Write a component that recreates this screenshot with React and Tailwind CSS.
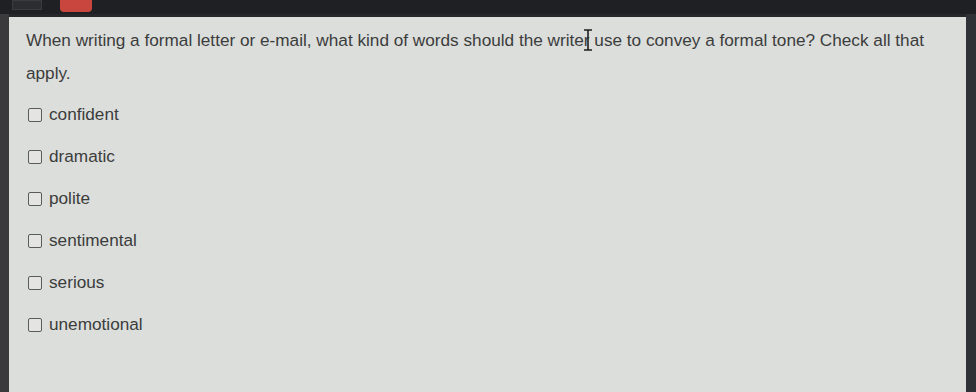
import React from "react";

const options = ["confident", "dramatic", "polite", "sentimental", "serious", "unemotional"];

const App = () => {
  return (
    <div className="flex h-[392px] w-[976px] flex-col overflow-hidden bg-[#26272b] font-['Liberation_Sans',Arial,sans-serif]">
      {/* Top strip */}
      <div className="flex h-[14px] items-start bg-[#1f2023]">
        <div className="ml-[12px] h-[10px] w-[30px] border border-[#3a3b3f] bg-[#2c2d31]" />
        <div className="ml-[18px] h-[12px] w-[32px] rounded-b-sm bg-[#c8463e]" />
      </div>

      <div className="flex flex-1">
        <div className="w-[9px] bg-[#3a3a3c]" />

        {/* Question panel */}
        <div className="relative mt-[3px] flex-1 bg-[#dcdedb] pl-[17px] pt-[7px] text-[17.2px] text-[#3b3c3c]">
          <p className="w-[912px] leading-[33px]">
            When writing a formal letter or e-mail, what kind of words should the writer use to convey a formal tone? Check all that apply.
          </p>

          <div className="mt-[14px] flex flex-col gap-[20px]">
            {options.map((o) => (
              <label key={o} className="flex h-[22px] items-center gap-[7px] pl-[2px]">
                <span className="h-[14px] w-[14px] rounded-[2px] border border-[#5a5b5b] bg-[#e4e5e2]" />
                <span>{o}</span>
              </label>
            ))}
          </div>

          {/* mouse cursor over the text */}
          <svg className="absolute left-[574px] top-[12px]" width="10" height="22" viewBox="0 0 10 22">
            <path d="M1 1h8M5 1v20M1 21h8" stroke="#1e1e1e" strokeWidth="1.6" fill="none" />
          </svg>
        </div>

        <div className="w-[10px] bg-[#2f3236]" />
      </div>
    </div>
  );
};

export default App;
